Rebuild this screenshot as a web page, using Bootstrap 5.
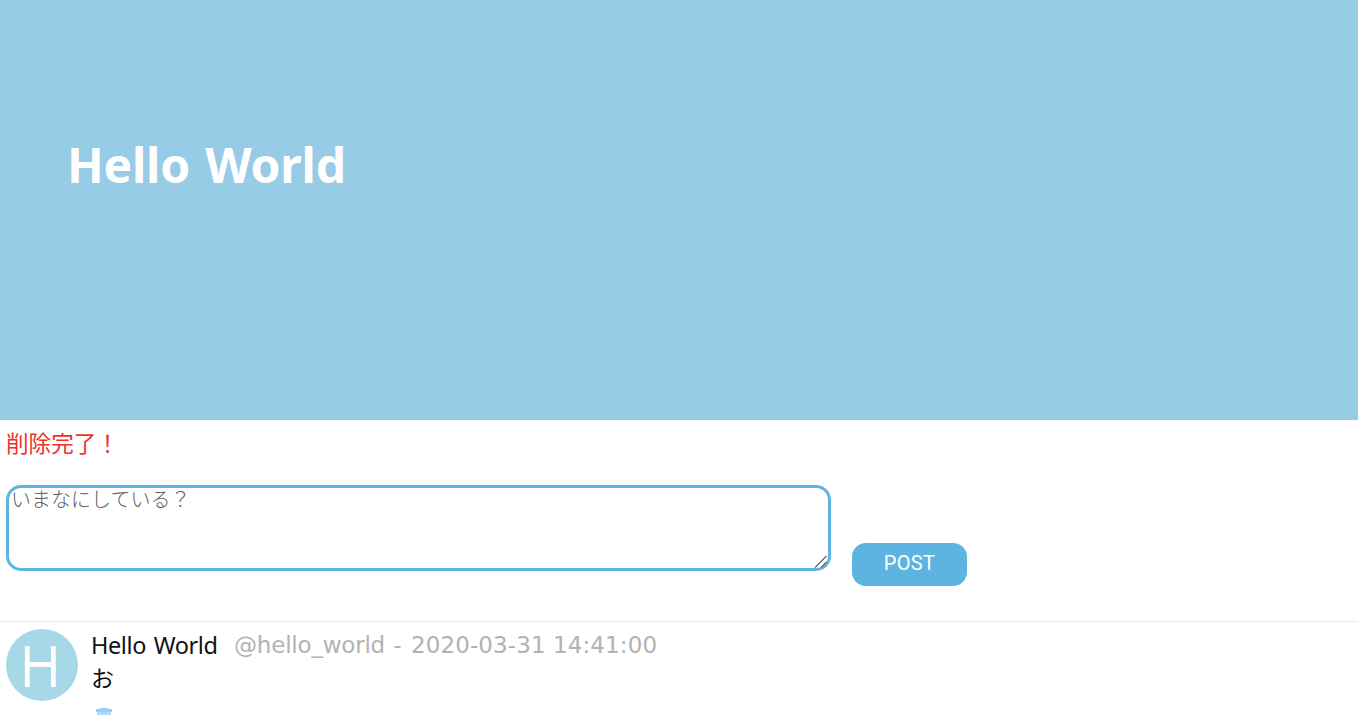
<!DOCTYPE html>
<html lang="ja">
<head>
<meta charset="utf-8">
<meta name="viewport" content="width=device-width, initial-scale=1">
<title>Hello World</title>
<link href="https://cdn.jsdelivr.net/npm/bootstrap@5.3.0/dist/css/bootstrap.min.css" rel="stylesheet">
<style>
body{font-family:"Noto Sans","Noto Sans CJK JP",sans-serif;color:#111;background:#fff}
.page{height:715px}
.hero{height:420px;background:#97cce7;padding:130px 0 0 67px}
.hero h1{font-size:48px;line-height:70px;letter-spacing:-.2px;word-spacing:3px}
.notice{height:65px;padding:6px 0 0 6px;font-size:22.6px;line-height:36px;color:#f03028}
.post-form{height:136px;padding-left:6px;gap:21px}
.post-input{width:825px;height:86px}
.post-input textarea{border:3px solid #5bb4e1;border-radius:15px;padding:0 2px;font:300 20px/21px "Noto Sans CJK JP",sans-serif;resize:none;outline:0}
.post-input textarea::placeholder{color:#606060;opacity:1}
.grip{right:3px;bottom:2px;width:14px;height:14px;pointer-events:none}
.post-btn,.post-btn:hover{width:115px;height:43px;margin-top:58px;border:0;border-radius:14px;background:#5db4e1;color:#fff;font:20px/41px Roboto,sans-serif;letter-spacing:.3px;padding:0 0 2px}
.post{border-top:1px solid #e8e8e8;padding:7px 0 0 6px;gap:13px}
.avatar{width:72px;height:72px;flex:none}
.post-head{font-size:23.5px;line-height:34px;height:33px;margin-top:-1px}
.author{width:143px;letter-spacing:-.4px;word-spacing:2px}
.meta{color:#b2b2b2;font-family:"DejaVu Sans","Noto Sans",sans-serif;font-size:23px}
.handle{letter-spacing:-.2px}
.dash{margin:0 2px 0 1px}
.date{letter-spacing:.1px}
.post-text{font-size:23px;line-height:32px;height:34px;font-family:"Noto Sans CJK JP",sans-serif}
.trash{width:18px;height:20px;margin-left:4px;margin-top:12px}
</style>
<script src="https://cdn.jsdelivr.net/npm/bootstrap@5.3.0/dist/js/bootstrap.bundle.min.js"></script>
</head>
<body>
<div class="page overflow-hidden">
<header class="hero"><h1 class="text-white fw-bold m-0">Hello World</h1></header>
<main>
<p class="notice m-0">削除完了！</p>
<form class="post-form d-flex align-items-start">
<div class="post-input position-relative">
<textarea class="d-block w-100 h-100" placeholder="いまなにしている？"></textarea>
<svg class="grip position-absolute" viewBox="0 0 14 14"><path d="M1 12.5 12.5 1M7 12.5l5.5-5.5" fill="none" stroke="#666" stroke-width="1.2"/></svg>
</div>
<button type="button" class="btn post-btn">POST</button>
</form>
<article class="post d-flex">
<svg class="avatar" viewBox="0 0 72 72"><circle cx="36" cy="36" r="36" fill="#a7d8e7"/><path d="M21.3 17.3V58M47.4 17.3V58M21.3 35.5H47.4" fill="none" stroke="#fff" stroke-width="4.8"/></svg>
<div>
<div class="post-head d-flex text-nowrap"><span class="author">Hello World</span><span class="meta"><span class="handle">@hello_world</span> <span class="dash">-</span> <span class="date">2020-03-31 14:41:00</span></span></div>
<div class="post-text">お</div>
<svg class="trash d-block" viewBox="0 0 18 20"><path d="M1 2h4l1-1h6l1 1h4v3H1z" fill="#9ccafa"/><path d="M2 5h14l-1 14H3z" fill="#b5d8ff"/></svg>
</div>
</article>
</main>
</div>
</body>
</html>
